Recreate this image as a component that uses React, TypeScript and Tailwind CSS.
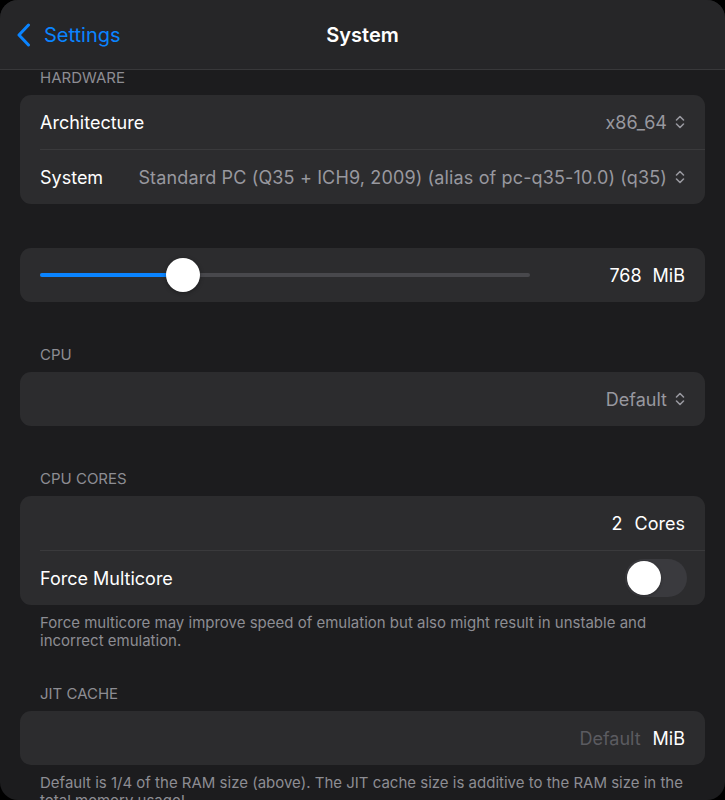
import React, { useState } from "react";

const font = { fontFamily: "Inter, 'Noto Sans', sans-serif" };

// small up/down chevron used by the pickers
function UpDown({ className = "" }: { className?: string }) {
  return (
    <svg width="10" height="14" viewBox="0 0 10 14" fill="none" className={className}>
      <path d="M1.5 5L5 1.5L8.5 5" stroke="currentColor" strokeWidth="1.6" strokeLinecap="round" strokeLinejoin="round" />
      <path d="M1.5 9L5 12.5L8.5 9" stroke="currentColor" strokeWidth="1.6" strokeLinecap="round" strokeLinejoin="round" />
    </svg>
  );
}

function Header({ children, className = "" }: { children: React.ReactNode; className?: string }) {
  return (
    <div className={`px-5 text-[15px] leading-[18px] uppercase text-[#8d8d93] mb-2 ${className}`}>{children}</div>
  );
}

function Card({ children, className = "" }: { children: React.ReactNode; className?: string }) {
  return <div className={`rounded-[11px] bg-[#2c2c2e] ${className}`}>{children}</div>;
}

function Divider() {
  return <div className="ml-5 h-px bg-[#3a3a3c]" />;
}

function Footer({ children }: { children: React.ReactNode }) {
  return <p className="px-5 mt-[9px] text-[15px] leading-[18px] text-[#8d8d93]">{children}</p>;
}

export default function App() {
  const [multicore, setMulticore] = useState(false);
  const ram = 768;
  const pct = ((184 - 41) / 490) * 100;

  return (
    <div className="h-[800px] w-full bg-black overflow-hidden" style={font}>
      <div className="h-full rounded-[18px] bg-[#1c1c1e] overflow-hidden flex flex-col">
        {/* nav bar */}
        <div className="h-[70px] shrink-0 bg-[#262628] border-b border-[#38383a] relative flex items-center">
          <button className="flex items-center gap-[13px] pl-4 text-[#0a84ff] text-[20px]">
            <svg width="15" height="24" viewBox="0 0 15 24" fill="none">
              <path d="M12.5 2L3 12L12.5 22" stroke="currentColor" strokeWidth="3" strokeLinecap="round" strokeLinejoin="round" />
            </svg>
            <span>Settings</span>
          </button>
          <div className="absolute left-0 right-0 text-center text-[20px] font-semibold text-white pointer-events-none">
            System
          </div>
        </div>

        {/* scrolled content */}
        <div className="flex-1 px-5 text-[18px]">
          <Header className="-mt-px">Hardware</Header>
          <Card>
            <div className="h-[54px] flex items-center px-5">
              <span className="text-white">Architecture</span>
              <span className="ml-auto flex items-center gap-[8px] text-[#98989f]">
                x86_64
                <UpDown />
              </span>
            </div>
            <Divider />
            <div className="h-[54px] flex items-center px-5">
              <span className="text-white">System</span>
              <span className="ml-auto flex items-center gap-[8px] text-[#98989f] whitespace-nowrap tracking-[0.14px]">
                Standard PC (Q35 + ICH9, 2009) (alias of pc-q35-10.0) (q35)
                <UpDown />
              </span>
            </div>
          </Card>

          <Card className="mt-[44px]">
            <div className="h-[54px] flex items-center px-5">
              <div className="relative w-[490px] h-[4px] rounded-full bg-[#48484c]">
                <div className="h-full rounded-full bg-[#0a84ff]" style={{ width: `${pct}%` }} />
                <div
                  className="absolute top-1/2 w-[34px] h-[34px] -translate-x-1/2 -translate-y-1/2 rounded-full bg-white shadow-[0_1px_4px_rgba(0,0,0,0.35)]"
                  style={{ left: `${pct}%` }}
                />
              </div>
              <span className="ml-auto flex items-center gap-[11px] text-white">
                <span>{ram}</span>
                <span>MiB</span>
              </span>
            </div>
          </Card>

          <Header className="mt-[44px]">CPU</Header>
          <Card>
            <div className="h-[54px] flex items-center px-5">
              <span className="ml-auto flex items-center gap-[8px] text-[#98989f]">
                Default
                <UpDown />
              </span>
            </div>
          </Card>

          <Header className="mt-[44px]">CPU Cores</Header>
          <Card>
            <div className="h-[54px] flex items-center px-5">
              <span className="ml-auto flex items-center gap-[12px] text-white">
                <span>2</span>
                <span>Cores</span>
              </span>
            </div>
            <Divider />
            <div className="h-[54px] flex items-center pl-5 pr-[18px]">
              <span className="text-white">Force Multicore</span>
              <button
                onClick={() => setMulticore(!multicore)}
                className={`ml-auto w-[62px] h-[38px] rounded-full p-[2px] flex ${multicore ? "bg-[#30d158] justify-end" : "bg-[#3a3a3e] justify-start"}`}
              >
                <span className="w-[34px] h-[34px] rounded-full bg-white shadow-[0_1px_3px_rgba(0,0,0,0.3)]" />
              </button>
            </div>
          </Card>
          <Footer>
            Force multicore may improve speed of emulation but also might result in unstable and incorrect emulation.
          </Footer>

          <Header className="mt-[35px]">JIT Cache</Header>
          <Card>
            <div className="h-[54px] flex items-center px-5">
              <span className="ml-auto flex items-center gap-[12px]">
                <span className="text-[#5b5b60]">Default</span>
                <span className="text-white">MiB</span>
              </span>
            </div>
          </Card>
          <Footer>
            Default is 1/4 of the RAM size (above). The JIT cache size is additive to the RAM size in the total memory usage!
          </Footer>
        </div>
      </div>
    </div>
  );
}
